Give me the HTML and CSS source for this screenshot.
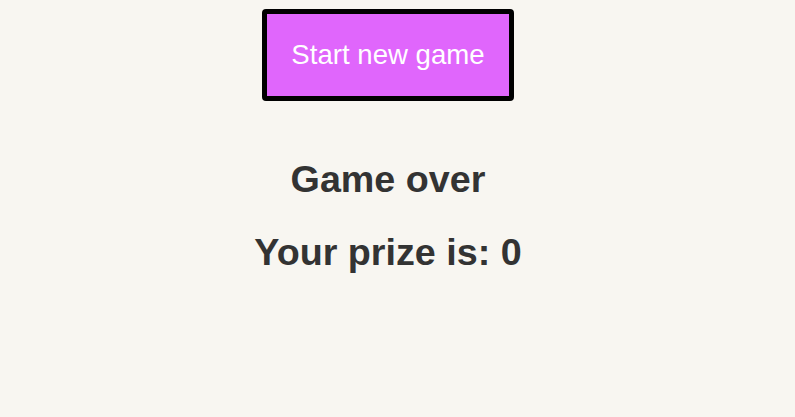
FILE: index.html
```html
<!DOCTYPE html>
<html>
<head>
<meta charset="utf-8">
<link rel="stylesheet" href="styles.css">
</head>
<body>
<main class="app">
  <button class="start-btn">Start new game</button>
  <div class="result">
    <h1 class="title">Game over</h1>
    <h1 class="title">Your prize is: 0</h1>
  </div>
</main>
</body>
</html>
```
FILE: styles.css
```css
html, body {
  margin: 0;
  padding: 0;
  background: #f8f6f1;
}
body {
  font-family: "Liberation Sans", Arial, sans-serif;
  color: #333333;
}
.app {
  width: 776px;
  display: flex;
  flex-direction: column;
  align-items: center;
  padding-top: 9px;
}
.start-btn {
  font-family: "Liberation Sans", Arial, sans-serif;
  font-size: 27.6px;
  line-height: 32px;
  color: #ffffff;
  background: #e066fc;
  border: 5px solid #000000;
  border-radius: 4px;
  padding: 25px 20px;
  width: 252px;
  height: 92px;
  box-sizing: border-box;
  cursor: pointer;
}
.result {
  display: flex;
  flex-direction: column;
  align-items: center;
  gap: 31px;
  margin-top: 57px;
}
.title {
  margin: 0;
  font-size: 37.7px;
  line-height: 42px;
  font-weight: bold;
}
```
